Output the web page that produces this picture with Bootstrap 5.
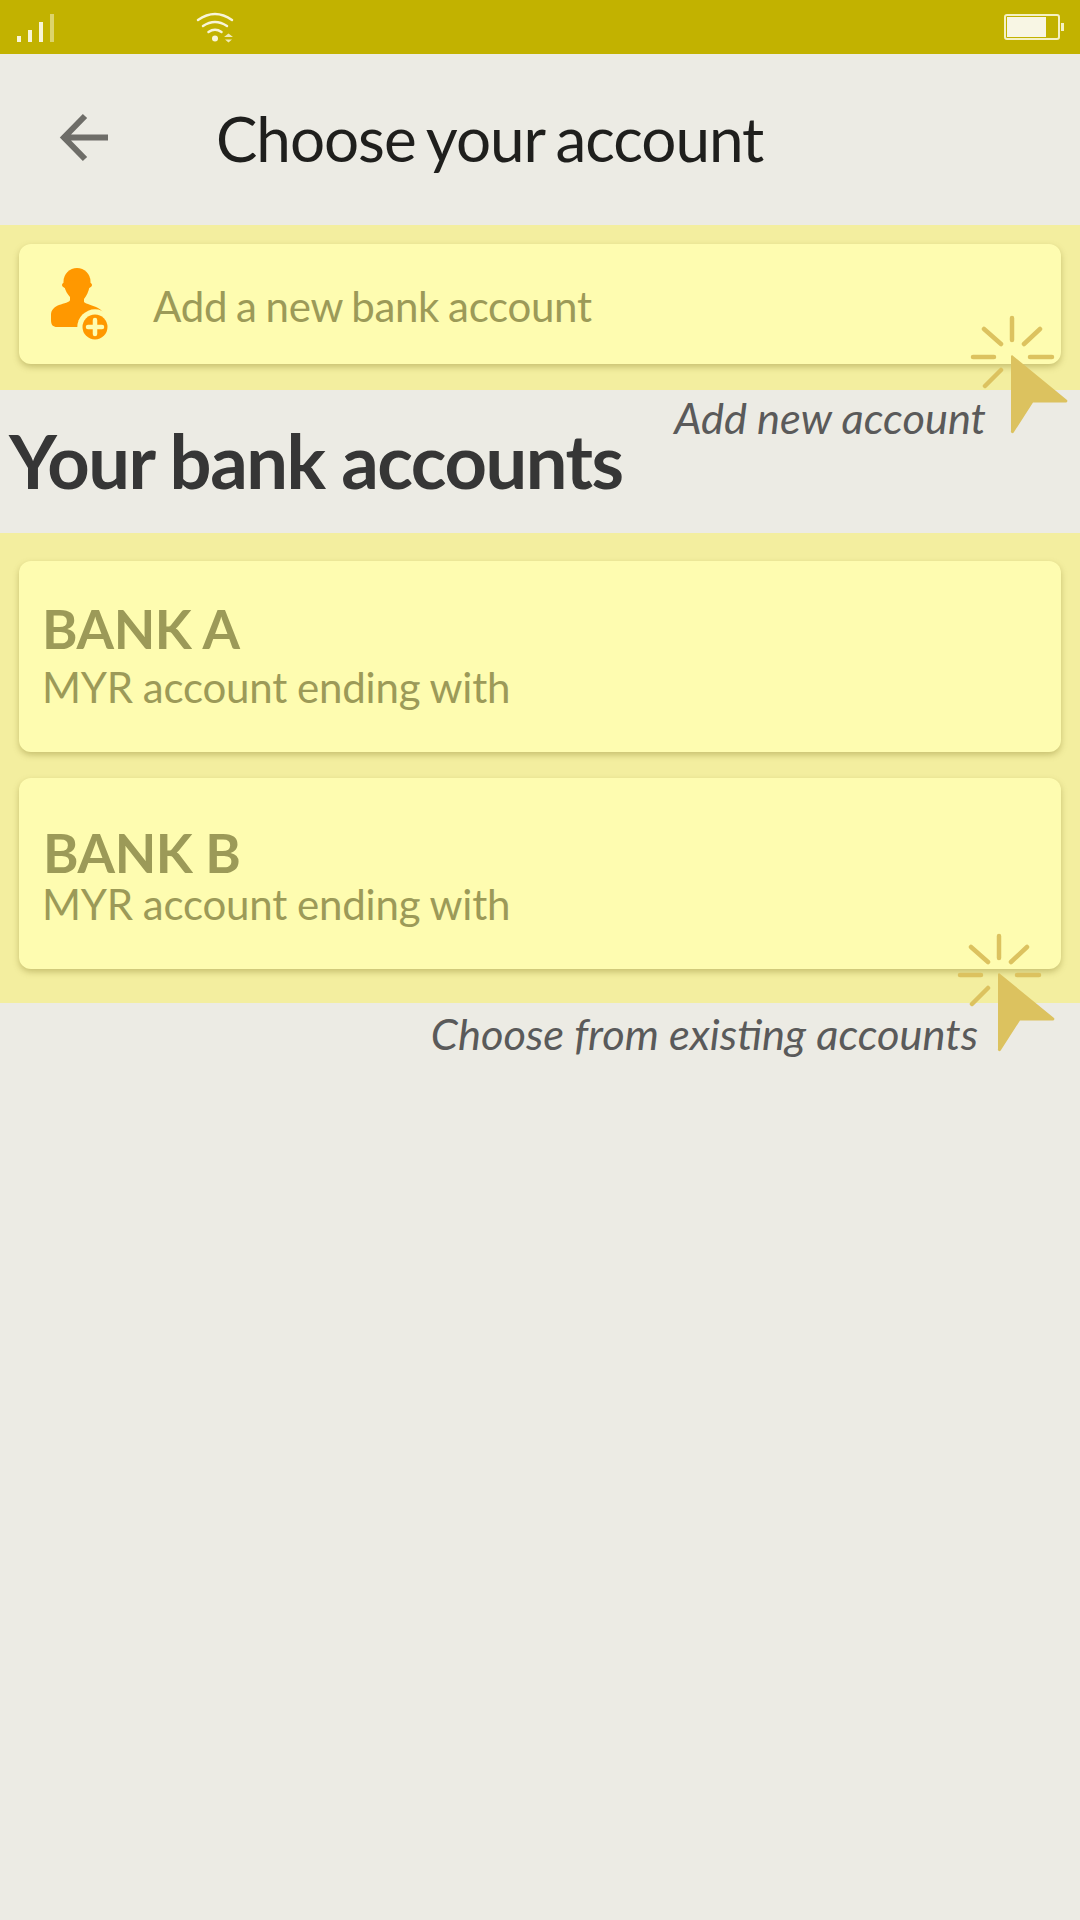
<!DOCTYPE html>
<html lang="en">
<head>
<meta charset="utf-8">
<title>Choose your account</title>
<link href="https://cdn.jsdelivr.net/npm/bootstrap@5.3.0/dist/css/bootstrap.min.css" rel="stylesheet">
<style>
body{background:#ecebe4;font-family:Lato,"Liberation Sans",sans-serif;width:1080px;min-height:1920px;overflow:hidden}
.status-strip{height:54px;background:#c2b200}
.status-strip svg{display:block}
.top-head{height:171px;color:#1f1f1d;padding-bottom:4px}
.top-head h1{font-size:62px;font-weight:400;margin:0 0 0 106px;line-height:1;letter-spacing:-1.05px;word-spacing:-3px}
.back-wrap{margin-left:59px;width:51px}
.band{background:#f3ee9f}
.band-add{height:165px;padding:19px 19px 0}
.band-list{height:470px;padding:28px 19px 0}
.pale-card{background:#fefcb0;border:0;border-radius:12px;box-shadow:0 3px 6px rgba(120,110,30,.35);color:#9c9a58}
.add-card{height:120px;padding-left:31px}
.add-card span{font-size:42px;margin-left:43px;padding-top:5px;letter-spacing:-.3px;word-spacing:-1.5px}
.bank-card{height:191px;padding:0 0 0 23px;margin-bottom:26px}
.bank-first{padding-top:35px}
.bank-second{padding-top:48px}
.bank-first .bank-name{line-height:66px}
.bank-second .bank-name{line-height:53px;padding-left:1px}
.bank-name{font-size:54px;font-weight:700;margin:0;letter-spacing:-.4px}
.bank-sub{font-size:42px;line-height:50px;margin:0;letter-spacing:-.2px;word-spacing:-.6px}
.heading-zone{height:143px;padding-left:9px}
.heading-zone h2{font-size:74px;font-weight:700;color:#363636;margin:0;line-height:142px;letter-spacing:-1.45px}
.note{position:absolute;font-style:italic;font-size:43.4px;color:#5a5a5a;line-height:1;white-space:nowrap}
.note-add{right:94px;top:396px}
.note-choose{right:102px;top:1012px}
.pointer{position:absolute;display:block}
.pointer-add{left:970px;top:315px}
.pointer-choose{left:957px;top:933px}
</style>
</head>
<body class="position-relative">
<div class="status-strip position-relative">
  <svg width="1080" height="54" viewBox="0 0 1080 54">
    <g fill="#f8f5d8">
      <rect x="17" y="36" width="4" height="6"/><rect x="28" y="30" width="4" height="12"/><rect x="39" y="22" width="4" height="20"/>
      <rect x="50" y="14" width="4" height="28" opacity=".5"/>
      <circle cx="215" cy="38.500" r="3"/>
      <path d="M224 37h9l-4.500-3.500zM225 39.500h7l-3.500 3z" opacity=".85"/>
    </g>
    <g fill="none" stroke="#f8f5d8" stroke-width="2.500" stroke-linecap="round">
      <path d="M198 20q17-12 34 0"/><path d="M203 26q12-8 24 0"/><path d="M208.500 32q6.500-4.500 13 0"/>
    </g>
    <rect x="1005" y="15" width="54" height="24" rx="2" fill="none" stroke="#f5f1c4" stroke-width="2"/>
    <rect x="1007" y="17" width="39" height="20" fill="#f8f6e4"/>
    <rect x="1061" y="23" width="3" height="8" fill="#f5f1c4"/>
  </svg>
</div>
<header class="top-head d-flex align-items-center">
  <div class="back-wrap">
    <svg width="51" height="51" viewBox="0 0 51 51" class="d-block"><path d="M49 25.500H5M26 4L5 25.500 26 47" fill="none" stroke="#6e6d68" stroke-width="6"/></svg>
  </div>
  <h1>Choose your account</h1>
</header>
<section class="band band-add">
  <div class="card pale-card add-card flex-row align-items-center">
    <svg width="60" height="76" viewBox="0 0 60 76" class="flex-shrink-0">
      <g fill="#ff9800">
        <ellipse cx="27" cy="15.500" rx="13.500" ry="13.500"/>
        <ellipse cx="27" cy="19" rx="15" ry="5"/>
        <path d="M14.500 21h25c-1 5-3 9-5.500 12v3c2 2 9 3.500 14 6 4 2 6 5 6 9v10H7c-4 0-6-2-6-7v-5c0-5 3-8 8-10 5-1.500 11-3 11-5v-3c-2.500-3-4.500-6-5.500-10z"/>
      </g>
      <circle cx="45" cy="61" r="17.700" fill="#fefcb0"/>
      <circle cx="45" cy="61" r="12.500" fill="#ff9800"/>
      <path d="M45 54v14M38 61h14" stroke="#fefcb0" stroke-width="4.500" stroke-linecap="round"/>
    </svg>
    <span>Add a new bank account</span>
  </div>
</section>
<section class="heading-zone"><h2>Your bank accounts</h2></section>
<section class="band band-list">
  <div class="card pale-card bank-card bank-first">
    <p class="bank-name">BANK A</p>
    <p class="bank-sub">MYR account ending with</p>
  </div>
  <div class="card pale-card bank-card bank-second">
    <p class="bank-name">BANK B</p>
    <p class="bank-sub">MYR account ending with</p>
  </div>
</section>
<span class="note note-add">Add new account</span>
<span class="note note-choose">Choose from existing accounts</span>
<svg class="pointer pointer-add" width="100" height="125" viewBox="0 0 100 125">
  <g stroke="#dcc25f" stroke-width="4.500" stroke-linecap="round" fill="none">
    <path d="M42 3v22M14 14l17 15M70 14L54 29M3 42h21M60 42h22M31 55L15 71"/>
  </g>
  <path d="M42 40l55 45a1.500 1.500 0 0 1-1 2.500H63L44 117a1.500 1.500 0 0 1-3-1V41z" fill="#dcc25f"/>
</svg>
<svg class="pointer pointer-choose" width="100" height="125" viewBox="0 0 100 125">
  <g stroke="#dcc25f" stroke-width="4.500" stroke-linecap="round" fill="none">
    <path d="M42 3v22M14 14l17 15M70 14L54 29M3 42h21M60 42h22M31 55L15 71"/>
  </g>
  <path d="M42 40l55 45a1.500 1.500 0 0 1-1 2.500H63L44 117a1.500 1.500 0 0 1-3-1V41z" fill="#dcc25f"/>
</svg>
<script src="https://cdn.jsdelivr.net/npm/bootstrap@5.3.0/dist/js/bootstrap.bundle.min.js"></script>
</body>
</html>
